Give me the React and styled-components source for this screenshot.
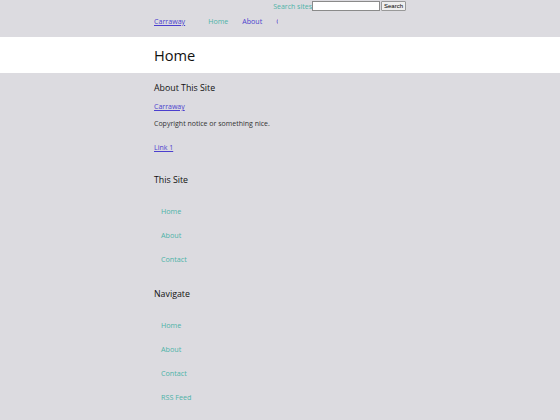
import styled, { createGlobalStyle } from "styled-components";

const GlobalStyle = createGlobalStyle`
  html, body {
    margin: 0;
    padding: 0;
    background: #dcdbe0;
    font-family: "Open Sans", "Noto Sans", sans-serif;
    color: #333;
  }
`;

const teal = "#4db3a8";
const purple = "#4b3fce";

const Wrap = styled.div`
  width: 252px;
  margin: 0 auto;
`;

const SearchForm = styled.form`
  display: flex;
  justify-content: flex-end;
  align-items: center;
  height: 12px;

  label {
    color: ${teal};
    font-size: 7px;
  }

  input {
    width: 68px;
    height: 10px;
    box-sizing: border-box;
    border: 1px solid #8a8a8a;
    padding: 0;
    margin: 0;
    background: #fff;
  }

  button {
    height: 10px;
    box-sizing: border-box;
    font-size: 6px;
    font-family: "Liberation Sans", Arial, sans-serif;
    padding: 0 2px;
    margin-left: 1px;
    border: 1px solid #999;
    border-radius: 1px;
    background: #efefef;
    line-height: 1;
  }
`;

const NavBar = styled.div`
  display: flex;
  align-items: center;
  height: 14px;
  margin-top: 2px;
  font-size: 7.1px;
`;

const Brand = styled.a`
  color: ${purple};
  text-decoration: underline;
  margin-right: 23px;
`;

const NavList = styled.ul`
  display: flex;
  gap: 14px;
  list-style: none;
  margin: 0;
  padding: 0;
  width: 70px;
  overflow: hidden;
  white-space: nowrap;
`;

const NavItem = styled.li`
  a {
    color: ${(p) => (p.$active ? teal : purple)};
    text-decoration: none;
  }
`;

const TitleBand = styled.div`
  background: #fff;
  margin-top: 9px;
  height: 36px;
  display: flex;
  align-items: center;
`;

const Title = styled.h1`
  font-size: 14.6px;
  font-weight: 400;
  color: #111;
  margin: 0;
`;

const Main = styled.main`
  padding-top: 8px;
`;

const Heading = styled.h3`
  font-size: 8.8px;
  font-weight: 500;
  color: #111;
  margin: 0;
  line-height: 14px;
`;

const Para = styled.p`
  font-size: 7px;
  margin: ${(p) => p.$m || "0"};
  line-height: 10px;

  a {
    color: ${purple};
  }
`;

const LinkList = styled.ul`
  list-style: none;
  margin: ${(p) => p.$top}px 0 0;
  padding: 0 0 0 7px;
  display: flex;
  flex-direction: column;
  gap: 14px;

  li {
    font-size: 7.2px;
    line-height: 10px;
  }

  a {
    color: ${teal};
    text-decoration: none;
  }
`;

const Block = styled.section`
  margin-top: ${(p) => p.$top}px;
`;

export default function App() {
  return (
    <>
      <GlobalStyle />
      <Wrap>
        <SearchForm onSubmit={(e) => e.preventDefault()}>
          <label>Search sites</label>
          <input type="text" />
          <button>Search</button>
        </SearchForm>
        <NavBar>
          <Brand href="#">Carraway</Brand>
          <NavList>
            <NavItem $active><a href="#">Home</a></NavItem>
            <NavItem><a href="#">About</a></NavItem>
            <NavItem><a href="#">Contact</a></NavItem>
          </NavList>
        </NavBar>
      </Wrap>
      <TitleBand>
        <Wrap>
          <Title>Home</Title>
        </Wrap>
      </TitleBand>
      <Wrap>
        <Main>
          <Heading>About This Site</Heading>
          <Para $m="7px 0 0"><a href="#">Carraway</a></Para>
          <Para $m="7px 0 0">Copyright notice or something nice.</Para>
          <Para $m="14px 0 0"><a href="#">Link 1</a></Para>
          <Block $top={20}>
            <Heading>This Site</Heading>
            <LinkList $top={19}>
              <li><a href="#">Home</a></li>
              <li><a href="#">About</a></li>
              <li><a href="#">Contact</a></li>
            </LinkList>
          </Block>
          <Block $top={23}>
            <Heading>Navigate</Heading>
            <LinkList $top={19}>
              <li><a href="#">Home</a></li>
              <li><a href="#">About</a></li>
              <li><a href="#">Contact</a></li>
              <li><a href="#">RSS Feed</a></li>
            </LinkList>
          </Block>
        </Main>
      </Wrap>
    </>
  );
}
